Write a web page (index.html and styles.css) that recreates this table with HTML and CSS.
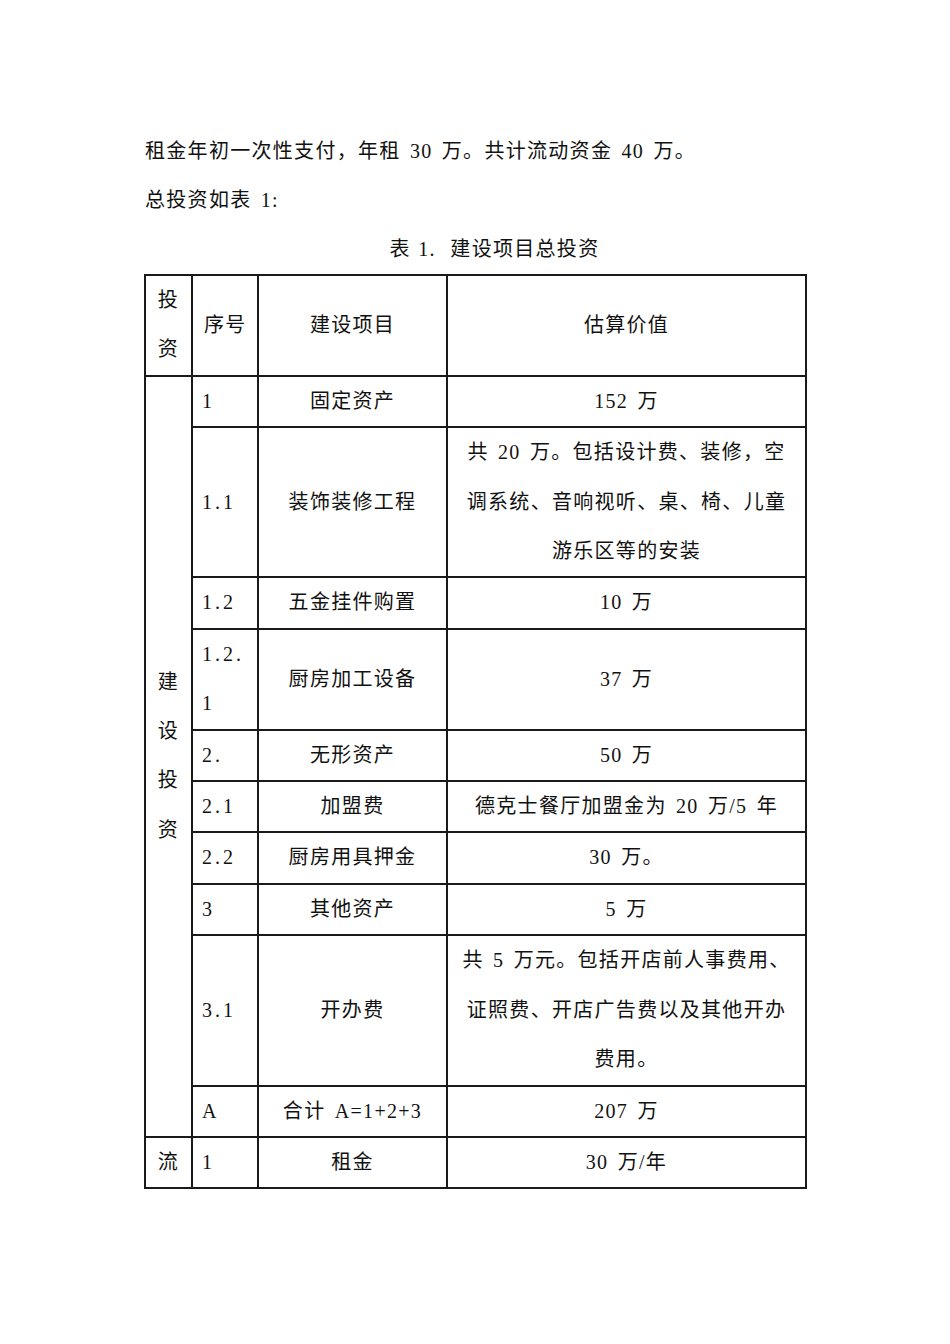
FILE: index.html
```html
<!DOCTYPE html>
<html lang="zh-CN">
<head>
<meta charset="utf-8">
<title>建设项目总投资</title>
<link rel="stylesheet" href="styles.css">
</head>
<body>
<div class="page">
  <p class="para">租金年初一次性支付，年租 30 万。共计流动资金 40 万。</p>
  <p class="para">总投资如表 1:</p>
  <p class="caption">表 1.&nbsp; 建设项目总投资</p>
  <table class="invest">
    <colgroup>
      <col class="c1">
      <col class="c2">
      <col class="c3">
      <col class="c4">
    </colgroup>
    <tr>
      <th class="cat">投资</th>
      <th class="seq">序号</th>
      <th class="item">建设项目</th>
      <th class="value">估算价值</th>
    </tr>
    <tr>
      <td class="cat" rowspan="10">建设投资</td>
      <td class="seq">1</td>
      <td class="item">固定资产</td>
      <td class="value">152 万</td>
    </tr>
    <tr>
      <td class="seq">1.1</td>
      <td class="item">装饰装修工程</td>
      <td class="value">共 20 万。包括设计费、装修，空调系统、音响视听、桌、椅、儿童游乐区等的安装</td>
    </tr>
    <tr>
      <td class="seq">1.2</td>
      <td class="item">五金挂件购置</td>
      <td class="value">10 万</td>
    </tr>
    <tr>
      <td class="seq">1.2.<wbr>1</td>
      <td class="item">厨房加工设备</td>
      <td class="value">37 万</td>
    </tr>
    <tr>
      <td class="seq">2.</td>
      <td class="item">无形资产</td>
      <td class="value">50 万</td>
    </tr>
    <tr>
      <td class="seq">2.1</td>
      <td class="item">加盟费</td>
      <td class="value">德克士餐厅加盟金为 20 万/5 年</td>
    </tr>
    <tr>
      <td class="seq">2.2</td>
      <td class="item">厨房用具押金</td>
      <td class="value">30 万。</td>
    </tr>
    <tr>
      <td class="seq">3</td>
      <td class="item">其他资产</td>
      <td class="value">5 万</td>
    </tr>
    <tr>
      <td class="seq">3.1</td>
      <td class="item">开办费</td>
      <td class="value">共 5 万元。包括开店前人事费用、证照费、开店广告费以及其他开办费用。</td>
    </tr>
    <tr>
      <td class="seq">A</td>
      <td class="item">合计 A=1+2+3</td>
      <td class="value">207 万</td>
    </tr>
    <tr>
      <td class="cat">流</td>
      <td class="seq">1</td>
      <td class="item">租金</td>
      <td class="value">30 万/年</td>
    </tr>
  </table>
</div>
</body>
</html>
```

FILE: styles.css
```css
html, body {
  margin: 0;
  padding: 0;
  background: #ffffff;
}

body {
  font-family: "Liberation Serif", "Noto Sans CJK SC", serif;
  font-size: 20px;
  color: #111111;
  letter-spacing: 1.3px;
  word-spacing: 3px;
  font-kerning: none;
}

.page {
  width: 661px;
  padding: 127px 0 0 144px;
}

.para {
  margin: 0;
  padding-left: 1px;
  line-height: 49px;
}

.caption {
  margin: 0;
  line-height: 49px;
  text-align: center;
  text-indent: 2em;
  word-spacing: 1px;
}

.invest {
  width: 661px;
  table-layout: fixed;
  border-collapse: collapse;
  margin: 0;
}

.c1 { width: 47px; }
.c2 { width: 66px; }
.c3 { width: 189px; }
.c4 { width: 359px; }

.invest th,
.invest td {
  border: 2px solid #1a1a1a;
  font-weight: normal;
  line-height: 49.4px;
  padding: 0 10px;
  vertical-align: middle;
  text-align: center;
}

.invest .cat {
  padding: 0 2px;
}

.invest .seq {
  text-align: left;
  padding: 0 4px 0 9px;
  letter-spacing: 3px;
}

.invest th.seq {
  letter-spacing: 1.3px;
  padding-left: 11px;
}

.invest .value {
  padding: 0 11px;
}
```
